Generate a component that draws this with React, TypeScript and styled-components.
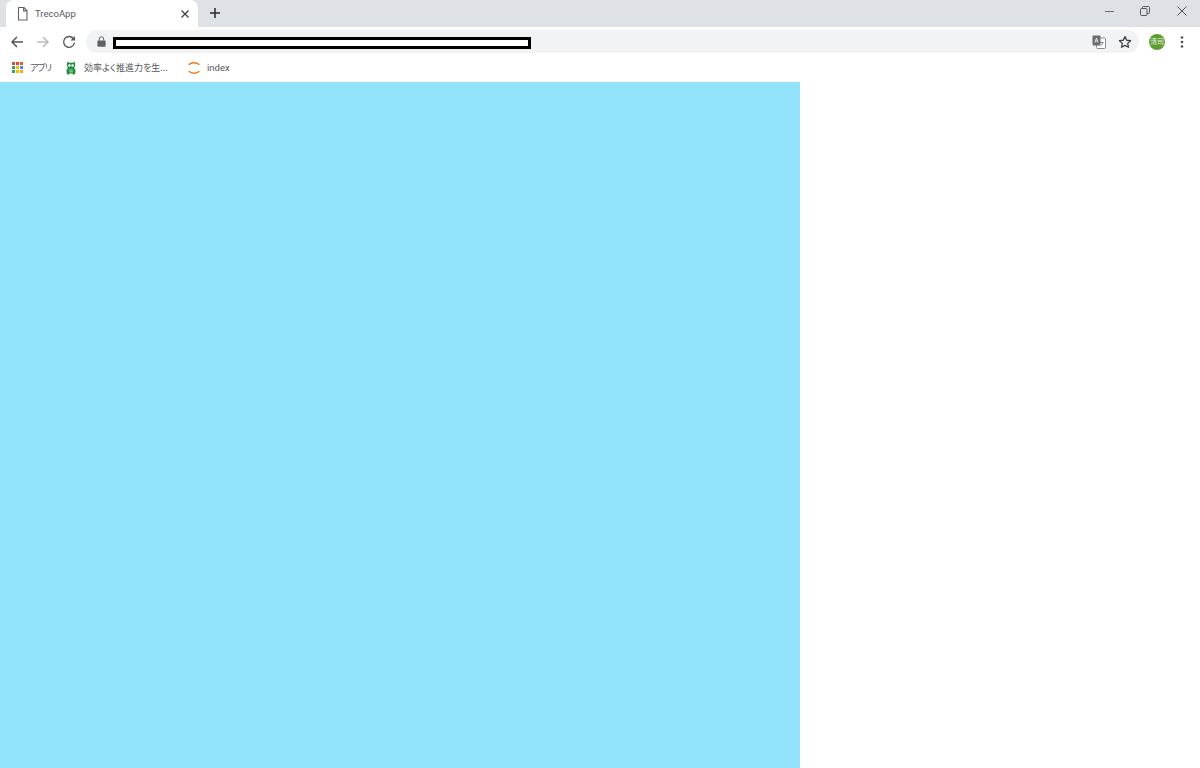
import React from "react";
import styled, { createGlobalStyle } from "styled-components";

const Global = createGlobalStyle`
  html, body { margin: 0; padding: 0; background: #fff; height: 100%; overflow: hidden; }
  #root { height: 100%; }
`;
const Page = styled.div`
  width: 1200px; height: 768px; display: flex; flex-direction: column; overflow: hidden;
  font-family: "Noto Sans CJK JP", "Noto Sans", sans-serif; background: #fff;
`;
const TabStrip = styled.div`
  height: 27px; background: #dee1e6; display: flex; align-items: flex-end; flex: none;
`;
const Tab = styled.div`
  width: 192px; height: 27px; margin-left: 6px; background: #fff; border-radius: 8px 8px 0 0;
  display: flex; align-items: center; padding: 0 8px 0 10px; box-sizing: border-box; flex: none;
`;
const TabTitle = styled.span`
  font: 9.5px Roboto, "Liberation Sans", sans-serif; color: #55585c; margin-left: 3px; flex: 1;
`;
const NewTab = styled.div`
  width: 16px; height: 27px; margin-left: 9px; padding-bottom: 2px; box-sizing: border-box;
  display: flex; align-items: center; justify-content: center; flex: none;
`;
const Spacer = styled.div`flex: 1;`;
const WindowButtons = styled.div`
  display: flex; align-self: flex-start; height: 22px; align-items: center; flex: none;
`;
const WindowButton = styled.div`
  width: 36px; display: flex; justify-content: center; align-items: center;
`;
const Toolbar = styled.div`
  height: 29px; display: flex; align-items: center; flex: none; background: #fff; padding-left: 9px; box-sizing: border-box;
`;
const NavButton = styled.div`
  width: 16px; height: 16px; margin-right: 10px; display: flex; align-items: center; justify-content: center; flex: none;
  &:nth-child(3) { margin-right: 9px; }
`;
const Omnibox = styled.div`
  width: 1053px; height: 23px; border-radius: 12px; background: #f1f3f4; flex: none;
  display: flex; align-items: center; padding-left: 11px; box-sizing: border-box;
`;
const UrlMask = styled.div`
  width: 418px; height: 12px; margin-left: 7px; background: #fff; border: 3px solid #000; box-sizing: border-box; flex: none; position: relative; top: 1px;
`;
const OmniIcons = styled.div`
  margin-left: auto; display: flex; align-items: center; gap: 12px; padding-right: 7px;
`;
const Avatar = styled.div`
  width: 16px; height: 16px; border-radius: 50%; background: #5c9e31; color: #e8f2e0; margin-left: 10px;
  font-size: 7px; display: flex; align-items: center; justify-content: center; flex: none; line-height: 1;
`;
const MenuDots = styled.div`
  width: 16px; display: flex; justify-content: center; margin-left: 9px; flex: none;
`;
const BookmarkBar = styled.div`
  height: 26px; display: flex; align-items: center; padding: 0 0 3px 12px; box-sizing: border-box; flex: none; background: #fff;
`;
const Bookmark = styled.div<{ $gap: number; $width: number }>`
  display: flex; align-items: center; gap: ${p => p.$gap}px; width: ${p => p.$width}px; flex: none;
  font-size: 9px; color: #55585c; white-space: nowrap; font-feature-settings: "palt";
`;
const TightLabel = styled.span`
  letter-spacing: -1px;
`;
const BookmarkLatin = styled.span`
  font: 9.5px Roboto, "Liberation Sans", sans-serif; color: #55585c;
`;
const Content = styled.div`
  flex: 1; width: 800px; background: #94e3fd;
`;

const appGrid = ["#e8453c","#e8453c","#ea5b32","#34a853","#fbbc05","#4285f4","#34a853","#fbbc05","#f9ab00"];

export default function App() {
  return (
    <Page>
      <Global />
      <TabStrip>
        <Tab>
          <svg width="16" height="16" viewBox="0 0 16 16" fill="none" stroke="#5f6368" strokeWidth="1.1">
            <path d="M2.5 1.5h5.3l3.2 3.2v9.3H2.5z" strokeLinejoin="round" />
            <path d="M7.6 1.5v3.4h3.4" />
          </svg>
          <TabTitle>TrecoApp</TabTitle>
          <svg width="10" height="10" viewBox="0 0 10 10" stroke="#3c4043" strokeWidth="1.3">
            <path d="M1.5 1.5l7 7M8.5 1.5l-7 7" />
          </svg>
        </Tab>
        <NewTab>
          <svg width="12" height="12" viewBox="0 0 12 12" stroke="#26282b" strokeWidth="1.5">
            <path d="M6 1v10M1 6h10" />
          </svg>
        </NewTab>
        <Spacer />
        <WindowButtons>
          <WindowButton>
            <svg width="10" height="10" viewBox="0 0 10 10" stroke="#6a6d71" strokeWidth="1"><path d="M0 5.5h9" /></svg>
          </WindowButton>
          <WindowButton>
            <svg width="10" height="10" viewBox="0 0 10 10" fill="none" stroke="#55585c" strokeWidth="1" style={{ marginRight: 2 }}>
              <rect x="0.5" y="2.5" width="6.5" height="7" rx="1" />
              <path d="M2.5 2.5V1.5a1 1 0 0 1 1-1h5a1 1 0 0 1 1 1v5a1 1 0 0 1-1 1H7" />
            </svg>
          </WindowButton>
          <WindowButton>
            <svg width="10" height="10" viewBox="0 0 10 10" stroke="#44474a" strokeWidth="0.9"><path d="M0.5 0.5l9 9M9.5 0.5l-9 9" /></svg>
          </WindowButton>
        </WindowButtons>
      </TabStrip>
      <Toolbar>
        <NavButton>
          <svg width="14" height="14" viewBox="0 0 14 14" fill="none" stroke="#54575b" strokeWidth="1.5"><path d="M13 7H2M7 2 2 7l5 5" /></svg>
        </NavButton>
        <NavButton>
          <svg width="14" height="14" viewBox="0 0 14 14" fill="none" stroke="#b9bbbe" strokeWidth="1.5"><path d="M1 7h11M7 2l5 5-5 5" /></svg>
        </NavButton>
        <NavButton>
          <svg width="14" height="14" viewBox="0 0 14 14" fill="none"><path d="M11.6 4A5.4 5.4 0 1 0 12.4 7.6" stroke="#54575b" strokeWidth="1.4" /><path d="M13 1v4.5H8.5z" fill="#54575b" /></svg>
        </NavButton>
        <Omnibox>
          <svg width="9" height="11" viewBox="0 0 9 11"><path d="M1 4.5h7a.6.6 0 0 1 .6.6v5a.6.6 0 0 1-.6.6H1a.6.6 0 0 1-.6-.6v-5A.6.6 0 0 1 1 4.5z" fill="#5f6368" /><path d="M2.3 4.5V3a2.2 2.2 0 0 1 4.4 0v1.5" fill="none" stroke="#5f6368" /></svg>
          <UrlMask />
          <OmniIcons>
            <svg width="14" height="14" viewBox="0 0 14 14">
              <rect x="4.5" y="3" width="9" height="10.5" rx="1" fill="#fff" stroke="#8a8d90" />
              <rect x="0.5" y="0.5" width="8" height="10" rx="1" fill="#6a6d71" />
              <path d="M3 7.5l1.5-4.5 1.5 4.5M3.6 6h1.8" stroke="#fff" strokeWidth="0.8" fill="none" />
              <path d="M8 7.5h3.5M9.8 6.8v.7M10.8 8c-.6 1.5-1.3 2.2-2.3 2.8" stroke="#6a6d71" strokeWidth="0.8" fill="none" />
            </svg>
            <svg width="14" height="14" viewBox="0 0 24 24" fill="none" stroke="#3f4246" strokeWidth="2.2" strokeLinejoin="round">
              <path d="M12 2.8l2.9 6.2 6.7.8-5 4.6 1.4 6.7-6-3.4-6 3.4 1.4-6.7-5-4.6 6.7-.8z" />
            </svg>
          </OmniIcons>
        </Omnibox>
        <Avatar>清司</Avatar>
        <MenuDots>
          <svg width="4" height="14" viewBox="0 0 4 14" fill="#4b4e52"><circle cx="2" cy="2.5" r="1.3" /><circle cx="2" cy="7" r="1.3" /><circle cx="2" cy="11.5" r="1.3" /></svg>
        </MenuDots>
      </Toolbar>
      <BookmarkBar>
        <Bookmark $gap={7} $width={54}>
          <svg width="11" height="11" viewBox="0 0 11 11">
            {appGrid.map((c, i) => (
              <rect key={i} x={(i % 3) * 4} y={Math.floor(i / 3) * 4} width="3" height="3" fill={c} />
            ))}
          </svg>
          <TightLabel>アプリ</TightLabel>
        </Bookmark>
        <Bookmark $gap={8} $width={121}>
          <svg width="10" height="14" viewBox="0 0 10 14">
            <path d="M1.6 0.5C2.4 1.4 3 1.8 3.6 1.8h2.8c.6 0 1.2-.4 2-1.3.6 1.4.9 3 .7 4.2-.2 1-.7 1.6-1.1 2.1.9.9 1.5 2.2 1.5 3.6 0 1.3-.4 2.2-.9 3.1H6.9l-.4-1H3.5l-.4 1H1.4C.9 12.6.5 11.7.5 10.4c0-1.4.6-2.7 1.5-3.6C1.6 6.300 1.100 5.700.9 4.700.7 3.500 1 1.900 1.600.5z" fill="#1e8e3e" />
            <circle cx="3.4" cy="4.500" r="1.300" fill="#fff" /><circle cx="6.600" cy="4.500" r="1.300" fill="#fff" />
            <path d="M3.200 9h3.600M3.200 10.800h3.600" stroke="#c9e8d1" strokeWidth="0.8" />
          </svg>
          効率よく推進力を生...
        </Bookmark>
        <Bookmark $gap={6} $width={60}>
          <svg width="14" height="14" viewBox="0 0 14 14" fill="none" stroke="#f07a21" strokeWidth="1.5">
            <path d="M1.6 3.800C4.500 1.200 9.500 1.200 12.400 3.800" />
            <path d="M1.600 10.200C4.500 12.800 9.500 12.800 12.400 10.200" />
          </svg>
          <BookmarkLatin>index</BookmarkLatin>
        </Bookmark>
      </BookmarkBar>
      <Content />
    </Page>
  );
}
